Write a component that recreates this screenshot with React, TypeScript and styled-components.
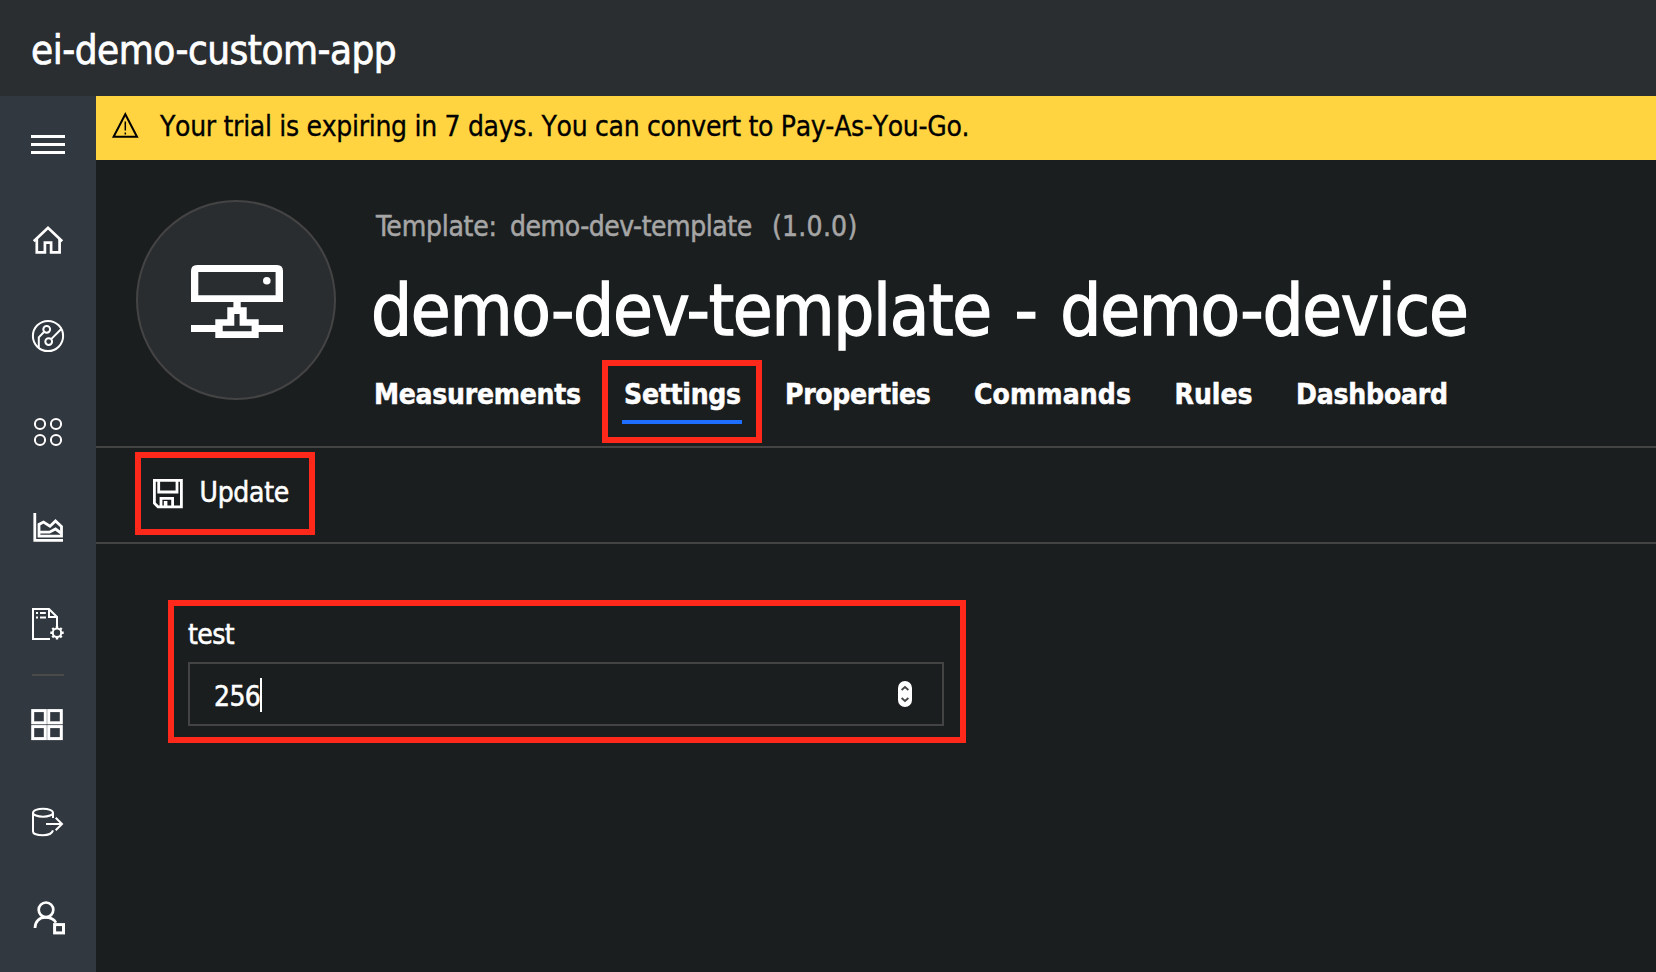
import React from "react";
import styled, { createGlobalStyle } from "styled-components";

const GlobalStyle = createGlobalStyle`
  *, *::before, *::after { box-sizing: border-box; }
  html, body { margin: 0; padding: 0; }
  body {
    background: #1b1e1f;
    color: #fff;
    font-family: "DejaVu Sans Condensed", "DejaVu Sans", Tahoma, sans-serif;
    font-stretch: condensed;
    font-size: 28px;
    overflow: hidden;
  }
`;

const Page = styled.div`
  display: flex;
  flex-direction: column;
  width: 1656px;
  height: 972px;
  overflow: hidden;
`;

const Text = styled.span<{ $track?: number; $light?: boolean }>`
  letter-spacing: ${(p) => p.$track ?? 0}px;
  white-space: pre;
  -webkit-text-stroke: ${(p) => (p.$light ? 0.011 : 0.018)}em currentColor;
`;

const TopBar = styled.header`
  display: flex;
  align-items: center;
  flex: none;
  height: 96px;
  padding: 4px 0 0 31px;
  background: #2b2e31;
  font-size: 40px;
`;

const Body = styled.div`
  display: flex;
  flex: 1;
  min-height: 0;
`;

const Sidebar = styled.nav`
  display: flex;
  flex-direction: column;
  align-items: center;
  flex: none;
  width: 96px;
  background: #32383f;
`;

const NavItem = styled.a`
  flex: none;
  width: 96px;
  height: 96px;

  svg {
    display: block;
    fill: none;
    stroke: #fff;
    stroke-width: 2;
  }
`;

const NavDivider = styled.hr`
  flex: none;
  width: 32px;
  height: 2px;
  margin: 2px 0 0;
  border: 0;
  background: #4a4a48;
`;

const Main = styled.main`
  display: flex;
  flex-direction: column;
  flex: 1;
  min-width: 0;
`;

const Banner = styled.div`
  display: flex;
  flex: none;
  gap: 21px;
  height: 64px;
  padding-left: 15px;
  background: #ffd440;
  color: #000;
  font-kerning: none;
  line-height: 62px;

  svg {
    margin-top: 15px;
  }
`;

const DeviceHeader = styled.section`
  display: flex;
  flex: none;
  gap: 36px;
  height: 288px;
  padding: 40px 0 0 40px;
  border-bottom: 2px solid #444;
`;

const Avatar = styled.div`
  flex: none;
  width: 200px;
  height: 200px;
  border: 2px solid #444;
  border-radius: 50%;
  background: #2a2d30;

  svg {
    display: block;
    margin: -2px;
  }
`;

const DeviceInfo = styled.div`
  padding-top: 7px;
`;

const TemplateLine = styled.div`
  display: grid;
  grid-template-columns: 134px 262px auto;
  padding-left: 4px;
  color: #a6a6a6;
  line-height: 40px;
`;

const DeviceTitle = styled.h1`
  margin: 18px 0 0 -1px;
  font-size: 72px;
  font-weight: 400;
  line-height: 90px;
  word-spacing: 4.4px;
`;

const Tabs = styled.div`
  display: grid;
  grid-template-columns: 250px 161px 189px 200.5px 121.5px auto;
  margin-top: 19px;
  font-weight: 700;
  line-height: 42px;
`;

const Tab = styled.div<{ $active?: boolean }>`
  position: relative;
  justify-self: start;
  height: 50px;
  width: ${(p) => (p.$active ? "120px" : "auto")};
  padding-left: 2px;
  border-bottom: 4px solid ${(p) => (p.$active ? "#1f6fff" : "transparent")};
`;

const Highlight = styled.div<{ $top: number; $right: number; $bottom: number; $left: number }>`
  position: absolute;
  top: ${(p) => -p.$top}px;
  right: ${(p) => -p.$right}px;
  bottom: ${(p) => -p.$bottom}px;
  left: ${(p) => -p.$left}px;
  border: 6px solid #ff291b;
  pointer-events: none;
`;

const Toolbar = styled.div`
  display: flex;
  align-items: center;
  flex: none;
  height: 96px;
  padding: 0 0 6px 57px;
  border-bottom: 2px solid #444;
`;

const UpdateButton = styled.div`
  position: relative;
  display: flex;
  align-items: center;
  gap: 16.5px;
  width: 136px;
  height: 40px;
  line-height: 40px;

  svg {
    flex: none;
    margin-top: 4px;
  }

  span {
    margin-top: 2px;
  }
`;

const Form = styled.form`
  padding: 70px 0 0 92px;
`;

const Field = styled.div`
  position: relative;
  width: 756px;
`;

const FieldLabel = styled.label`
  display: block;
  height: 48px;
  line-height: 42px;
`;

const NumberBox = styled.div`
  display: flex;
  align-items: center;
  height: 64px;
  padding: 2px 30px 0 24px;
  border: 2px solid #444;
`;

const Value = styled(Text)`
  margin-top: 2px;
`;

const Caret = styled.span`
  width: 2px;
  height: 34px;
  background: #fff;
`;

const Stepper = styled.span`
  display: flex;
  margin: -2px 0 0 auto;
`;

const navTop = [
  <path d="M31 40.5H65M31 48.5H65M31 56.5H65" strokeWidth="3" />,
  <g strokeWidth="2.7">
    <path d="M33.8 49.3L48 35.8L62.2 49.3" />
    <path d="M36.8 47V60.4H44.9V50.7H51.1V60.4H59.6V47" />
  </g>,
  <g>
    <circle cx="48" cy="48" r="15.1" />
    <circle cx="46.7" cy="41.3" r="3.4" />
    <circle cx="48.7" cy="53.6" r="3.4" />
    <path d="M44.2 43.8L38.8 49.4V59.5M51.2 51.1L61 41.2" />
  </g>,
  <g>
    <circle cx="40" cy="40" r="5.1" />
    <circle cx="56" cy="40" r="5.1" />
    <circle cx="40" cy="56" r="5.1" />
    <circle cx="56" cy="56" r="5.1" />
  </g>,
  <g strokeWidth="2.8">
    <path d="M34.8 33V60.4H63" />
    <path d="M39 56.2V44.4L43.5 42L50 46.2L55.5 41L61.5 46.6V56.2Z" />
    <path d="M39 52.2H49.5L55.5 49L61 53" />
  </g>,
  <g>
    <path d="M50 63H33V33H49L57 41V50M49 33V41H57" />
    <path d="M36 37H38M40 37H45.8M36 41.6H38M40 41.6H46" />
    <circle cx="57" cy="56.7" r="4.2" />
    <path
      d="M57 50V52.2M57 61.2V63.4M50.3 56.7H52.5M61.5 56.7H63.7M52.3 52L53.8 53.5M60.2 59.9L61.7 61.4M52.3 61.4L53.8 59.9M60.2 53.5L61.7 52"
      strokeWidth="2.4"
    />
  </g>,
];

const navBottom = [
  <g strokeWidth="3">
    <rect x="32.7" y="34.6" width="12.6" height="12.2" />
    <rect x="48.7" y="34.6" width="12.6" height="12.2" />
    <rect x="32.7" y="50.6" width="12.6" height="12" />
    <rect x="48.7" y="50.6" width="12.6" height="12" />
  </g>,
  <g>
    <ellipse cx="43" cy="40.7" rx="10" ry="4" />
    <path d="M33 41V59.4C33 61.6 37 63.2 43 63.2C48.4 63.2 52 61.6 53 58.4M53 41V46" />
    <path d="M46 52H62M55.7 45.8L62 52L55.7 58.2" />
  </g>,
  <g strokeWidth="2.7">
    <circle cx="46" cy="41.8" r="7.3" />
    <path d="M35 60C35 53.5 39.5 49.4 45.4 49.4C50 49.4 54 51.2 56 54.6" />
    <rect x="54.6" y="56.6" width="8.9" height="8.3" strokeWidth="3" />
  </g>,
];

const renderNav = (icons: React.ReactElement[], prefix: string) =>
  icons.map((icon, i) => (
    <NavItem key={prefix + i}>
      <svg width="96" height="96" viewBox="0 0 96 96">
        {icon}
      </svg>
    </NavItem>
  ));

const WarningIcon = () => (
  <svg width="28" height="28" viewBox="0 0 28 28" fill="none" stroke="#000" strokeWidth="2">
    <path d="M14.3 3.2L2.6 25.8H26Z" />
    <path d="M14.3 10.5V19.5M14.3 21.5V23.5" strokeWidth="1.5" />
  </svg>
);

const DeviceIcon = () => (
  <svg width="200" height="200" viewBox="0 0 200 200" fill="#fff" fillRule="evenodd">
    <path d="M55 102V71Q55 65 61 65H141Q147 65 147 71V102ZM62.3 72V95.2H139.6V72Z" />
    <circle cx="130.8" cy="80.8" r="3.8" />
    <path d="M97.4 101V107.2H91.3V119.2H79.3V125H55V132H79.3V138H122.7V132H147V125H122.7V119.2H110.7V107.2H104.7V101ZM98.3 114H103.6V125.7H115.6V131.3H86.7V125.7H98.3Z" />
  </svg>
);

const SaveIcon = () => (
  <svg width="30" height="30" viewBox="0 0 30 30" fill="none" stroke="#fff" strokeWidth="2.8">
    <path d="M1.4 1.4H28.4V27.8H5L1.4 24.2Z" />
    <path d="M5.7 1.4V13H24V1.4" />
    <path d="M8 28V19.4H19.6V28" />
    <path d="M12.6 22V28" strokeWidth="3.6" />
  </svg>
);

const StepperIcon = () => (
  <svg width="14" height="26" viewBox="0 0 14 26">
    <rect width="14" height="26" rx="7" fill="#fff" />
    <path d="M3.6 9L7 6L10.4 9M3.6 17L7 20L10.4 17" fill="none" stroke="#444" strokeWidth="1.8" />
  </svg>
);

const tabs = [
  { label: "Measurements", track: -0.27 },
  { label: "Settings", track: -0.26, active: true },
  { label: "Properties", track: -0.3 },
  { label: "Commands", track: 0.1 },
  { label: "Rules", track: 0 },
  { label: "Dashboard", track: -0.2 },
];

export default function App() {
  return (
    <Page>
      <GlobalStyle />
      <TopBar>
        <Text $track={-0.5}>ei-demo-custom-app</Text>
      </TopBar>
      <Body>
        <Sidebar>
          {renderNav(navTop, "top")}
          <NavDivider />
          {renderNav(navBottom, "bottom")}
        </Sidebar>
        <Main>
          <Banner>
            <WarningIcon />
            <Text $track={-0.31} $light>
              Your trial is expiring in 7 days. You can convert to Pay-As-You-Go.
            </Text>
          </Banner>
          <DeviceHeader>
            <Avatar>
              <DeviceIcon />
            </Avatar>
            <DeviceInfo>
              <TemplateLine>
                <Text $track={-0.25}>Template:</Text>
                <Text $track={-0.46}>demo-dev-template</Text>
                <Text $track={0.25}>(1.0.0)</Text>
              </TemplateLine>
              <DeviceTitle>
                <Text $track={-1.28}>demo-dev-template - demo-device</Text>
              </DeviceTitle>
              <Tabs>
                {tabs.map((tab) => (
                  <Tab key={tab.label} $active={tab.active}>
                    <Text $track={tab.track}>{tab.label}</Text>
                    {tab.active && <Highlight $top={14} $right={20} $bottom={23} $left={20} />}
                  </Tab>
                ))}
              </Tabs>
            </DeviceInfo>
          </DeviceHeader>
          <Toolbar>
            <UpdateButton>
              <SaveIcon />
              <Text $track={-0.3}>Update</Text>
              <Highlight $top={20} $right={26} $bottom={23} $left={18} />
            </UpdateButton>
          </Toolbar>
          <Form>
            <Field>
              <FieldLabel>
                <Text $track={-0.6}>test</Text>
              </FieldLabel>
              <NumberBox>
                <Value $track={-0.6}>256</Value>
                <Caret />
                <Stepper>
                  <StepperIcon />
                </Stepper>
              </NumberBox>
              <Highlight $top={14} $right={22} $bottom={17} $left={20} />
            </Field>
          </Form>
        </Main>
      </Body>
    </Page>
  );
}
